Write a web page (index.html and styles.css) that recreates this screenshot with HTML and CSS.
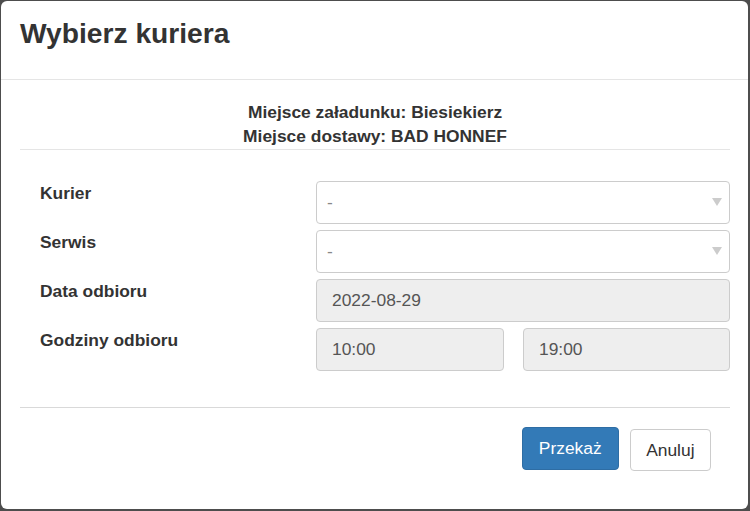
FILE: index.html
```html
<!DOCTYPE html>
<html lang="pl">
<head>
<meta charset="utf-8">
<title>Wybierz kuriera</title>
<link rel="stylesheet" href="styles.css">
</head>
<body>
<div class="modal">
  <div class="modal-header">
    <h4 class="modal-title">Wybierz kuriera</h4>
  </div>
  <div class="modal-body">
    <div class="route">
      <div>Miejsce załadunku: Biesiekierz</div>
      <div>Miejsce dostawy: BAD HONNEF</div>
    </div>
    <div class="form">
      <div class="row">
        <label class="label">Kurier</label>
        <div class="field select"><span>-</span><svg class="caret" width="10" height="8" viewBox="0 0 10 8"><path d="M0 0H10L5 8Z" fill="#cccccc"/></svg></div>
      </div>
      <div class="row">
        <label class="label">Serwis</label>
        <div class="field select"><span>-</span><svg class="caret" width="10" height="8" viewBox="0 0 10 8"><path d="M0 0H10L5 8Z" fill="#cccccc"/></svg></div>
      </div>
      <div class="row">
        <label class="label">Data odbioru</label>
        <div class="field disabled">2022-08-29</div>
      </div>
      <div class="row">
        <label class="label">Godziny odbioru</label>
        <div class="times">
          <div class="field disabled">10:00</div>
          <div class="field disabled">19:00</div>
        </div>
      </div>
    </div>
  </div>
  <div class="modal-footer">
    <button class="btn btn-primary">Przekaż</button>
    <button class="btn btn-default">Anuluj</button>
  </div>
</div>
</body>
</html>
```
FILE: styles.css
```css
* { box-sizing: border-box; }
html, body { margin: 0; padding: 0; }
body {
  width: 750px;
  height: 511px;
  background: #4d4d4d;
  font-family: "Liberation Sans", Arial, sans-serif;
  color: #333;
  overflow: hidden;
}
.modal {
  margin: 1px 2px 0 1px;
  width: 747px;
  height: 508px;
  background: #fff;
  border-radius: 6px;
  display: flex;
  flex-direction: column;
}
.modal-header {
  padding: 17px 20px 30px 19px;
  border-bottom: 1px solid #e5e5e5;
  height: 79px;
  flex-shrink: 0;
}
.modal-title {
  margin: 0;
  font-size: 28.2px;
  line-height: 30.8px;
  font-weight: bold;
  color: #333;
}
.modal-body {
  padding: 20px 18px 0 19px;
}
.route {
  text-align: center;
  font-weight: bold;
  font-size: 17.4px;
  line-height: 24px;
  padding-bottom: 1px;
  border-bottom: 1px solid #e5e5e5;
}
.form {
  padding: 31px 0 0 20px;
  display: flex;
  flex-direction: column;
  gap: 6px;
}
.row {
  display: flex;
  align-items: flex-start;
}
.label {
  width: 276px;
  flex-shrink: 0;
  font-weight: bold;
  font-size: 17.4px;
  line-height: 24px;
}
.field {
  height: 43px;
  border: 1px solid #ccc;
  border-radius: 4px;
  font-size: 17.4px;
  color: #555;
  display: flex;
  align-items: center;
  padding: 0 15px;
  flex-shrink: 0;
}
.row > .field { width: 414px; }
.select {
  justify-content: space-between;
  padding: 0 7px 0 10px;
  color: #888;
}
.caret { margin-top: -2px; }
.disabled { background: #eee; }
.times {
  width: 414px;
  flex-shrink: 0;
  display: flex;
  gap: 19px;
}
.times .field:first-child { width: 188px; }
.times .field:last-child { width: 207px; }
.modal-footer {
  margin: 36px 18px 0 19px;
  border-top: 1px solid #d9d9d9;
  padding: 19px 19px 0 0;
  display: flex;
  justify-content: flex-end;
  align-items: flex-start;
  gap: 11px;
}
.btn {
  font-family: "Liberation Sans", Arial, sans-serif;
  font-size: 17.4px;
  height: 43px;
  padding: 0 16px;
  border-radius: 4px;
  border: 1px solid transparent;
  cursor: pointer;
}
.btn-primary {
  background: #337ab7;
  border-color: #2e6da4;
  color: #fff;
}
.btn-default {
  background: #fff;
  border-color: #ccc;
  color: #333;
  margin-top: 2px;
  height: 42px;
  padding: 0 15.5px;
}
```
